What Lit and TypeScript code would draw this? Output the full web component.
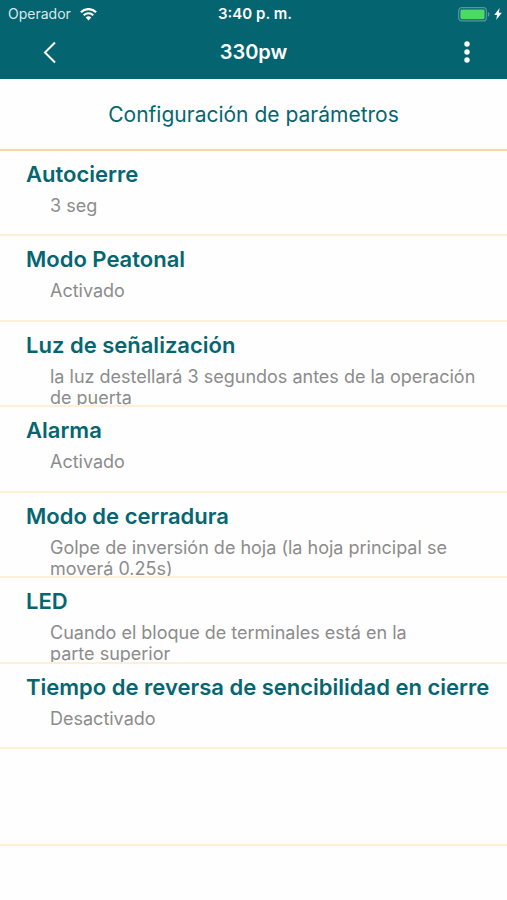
import { LitElement, html, css } from "lit";
import { customElement, property } from "lit/decorators.js";

interface Parameter {
  name: string;
  value: string;
}

const PARAMETERS: Parameter[] = [
  { name: "Autocierre", value: "3 seg" },
  { name: "Modo Peatonal", value: "Activado" },
  {
    name: "Luz de señalización",
    value: "la luz destellará 3 segundos antes de la operación de puerta",
  },
  { name: "Alarma", value: "Activado" },
  {
    name: "Modo de cerradura",
    value: "Golpe de inversión de hoja (la hoja principal se moverá 0.25s)",
  },
  {
    name: "LED",
    value: "Cuando el bloque de terminales está en la\nparte superior",
  },
  { name: "Tiempo de reversa de sencibilidad en cierre", value: "Desactivado" },
];

@customElement("status-bar")
export class StatusBar extends LitElement {
  static styles = css`
    :host {
      display: grid;
      grid-template-columns: 1fr auto 1fr;
      align-items: center;
      height: 28px;
      padding: 0 5px 0 8px;
      font-size: 14px;
      line-height: 20px;
    }
    .carrier {
      display: flex;
      align-items: center;
      gap: 9px;
      color: #d9e8ea;
    }
    .time {
      font-size: 15px;
      font-weight: 600;
    }
    .power {
      display: flex;
      align-items: center;
      justify-content: flex-end;
      gap: 4px;
    }
    svg {
      display: block;
    }
  `;

  render() {
    return html`
      <div class="carrier">
        <span>Operador</span>
        <svg width="17" height="13" viewBox="0 0 17 13" fill="none" aria-hidden="true">
          <path d="M.9 4.200a10.800 10.800 0 0 1 15.200 0" stroke="#fff" stroke-width="2.200" />
          <path d="M3.700 7.200a6.900 6.900 0 0 1 9.600 0" stroke="#fff" stroke-width="2" />
          <path d="M8.500 12.400 5.700 9.500a4 4 0 0 1 5.600 0z" fill="#fff" />
        </svg>
      </div>
      <span class="time">3:40 p. m.</span>
      <div class="power">
        <svg width="32" height="15" viewBox="0 0 32 15" fill="none" aria-hidden="true">
          <rect x="0.7" y="0.7" width="27.6" height="13.2" rx="3" stroke="#5b949d" stroke-width="1.2" />
          <rect x="2.4" y="2.4" width="24.2" height="9.8" rx="1.4" fill="#4cd964" />
          <path d="M29.8 5v4.8c1-.3 1.7-1.2 1.7-2.4S30.8 5.3 29.8 5z" fill="#5b949d" />
        </svg>
        <svg width="8" height="12" viewBox="0 0 8 12" aria-hidden="true">
          <path d="M5.6 0 .2 6.9h2.900L2.200 12l5.600-7.200H4.800z" fill="#fff" />
        </svg>
      </div>
    `;
  }
}

@customElement("nav-bar")
export class NavBar extends LitElement {
  @property() heading = "";

  static styles = css`
    :host {
      display: grid;
      grid-template-columns: 1fr auto 1fr;
      align-items: center;
      height: 48px;
      padding: 0 18px 3px 28px;
    }
    h1 {
      margin: 0;
      padding-right: 10px;
      font-size: 20px;
      line-height: 28px;
      font-weight: 600;
    }
    button {
      display: grid;
      place-items: center;
      width: 44px;
      height: 44px;
      padding: 0;
      border: 0;
      background: none;
      color: inherit;
    }
    .menu {
      justify-self: end;
    }
  `;

  render() {
    return html`
      <button aria-label="Volver">
        <svg width="14" height="23" viewBox="0 0 14 23" fill="none" aria-hidden="true">
          <path d="M12 1.5 2 11.5l10 10" stroke="#fff" stroke-width="2" />
        </svg>
      </button>
      <h1>${this.heading}</h1>
      <button class="menu" aria-label="Más opciones">
        <svg width="6" height="22" viewBox="0 0 6 22" fill="#fff" aria-hidden="true">
          <circle cx="3" cy="3" r="2.7" />
          <circle cx="3" cy="11" r="2.7" />
          <circle cx="3" cy="19" r="2.7" />
        </svg>
      </button>
    `;
  }
}

@customElement("app-root")
export class AppRoot extends LitElement {
  static styles = css`
    :host {
      display: block;
      min-height: 100vh;
      background: #fefefe;
      color: #056671;
      font-family: Inter, "Liberation Sans", sans-serif;
    }
    header {
      background: #046470;
      color: #fff;
    }
    h2 {
      margin: 0;
      padding: 22px 16px 20px;
      border-bottom: 2px solid #f9d9a3;
      font-size: 21px;
      line-height: 28px;
      font-weight: 400;
      text-align: center;
    }
    .list {
      display: grid;
      grid-template-rows: repeat(7, 1fr);
      height: 598px;
      margin: 0;
    }
    .row {
      box-sizing: border-box;
      min-height: 0;
      overflow: hidden;
      padding: 9px 12px 0 26px;
      border-bottom: 2px solid #fdefd8;
    }
    dt {
      font-size: 22px;
      line-height: 28px;
      font-weight: 600;
    }
    dd {
      margin: 7px 0 0 24px;
      font-size: 18px;
      line-height: 21px;
      color: #8c8c8c;
      white-space: pre-line;
    }
    .blank {
      height: 95px;
      border-bottom: 2px solid #fdefd8;
    }
  `;

  render() {
    return html`
      <header>
        <status-bar></status-bar>
        <nav-bar heading="330pw"></nav-bar>
      </header>
      <main>
        <h2>Configuración de parámetros</h2>
        <dl class="list">
          ${PARAMETERS.map(
            (p) => html`
              <div class="row">
                <dt>${p.name}</dt>
                <dd>${p.value}</dd>
              </div>
            `
          )}
        </dl>
        <div class="blank"></div>
      </main>
    `;
  }
}
